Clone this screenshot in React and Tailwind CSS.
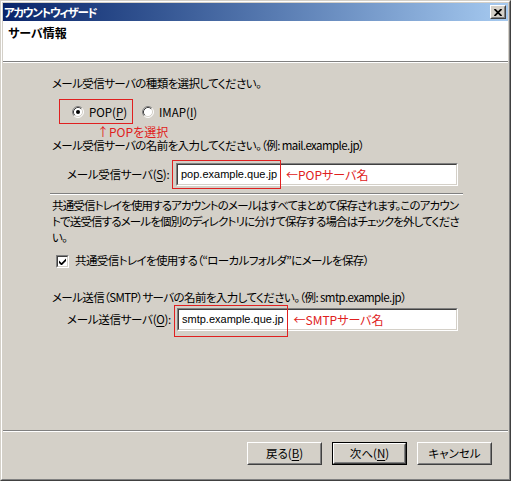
const jp = "font-['Noto_Sans_CJK_JP',sans-serif] [font-feature-settings:'palt']";

const Radio = ({ checked }) => (
  <svg width="12" height="12" viewBox="0 0 12 12" className="shrink-0">
    <circle cx="6" cy="6" r="5" fill="#ffffff" />
    <path d="M2.11 9.89 A5.5 5.5 0 0 1 9.89 2.11" fill="none" stroke="#808080" />
    <path d="M9.89 2.11 A5.5 5.5 0 0 1 2.11 9.89" fill="none" stroke="#ffffff" />
    <path d="M2.82 9.18 A4.5 4.5 0 0 1 9.18 2.82" fill="none" stroke="#404040" />
    <path d="M9.18 2.82 A4.5 4.5 0 0 1 2.82 9.18" fill="none" stroke="#d4d0c8" />
    {checked && <circle cx="6" cy="6" r="2" fill="#000000" />}
  </svg>
);

const CheckBox = () => (
  <div className="w-[13px] h-[13px] shrink-0 border border-t-[#808080] border-l-[#808080] border-b-white border-r-white">
    <div className="w-full h-full bg-white border border-t-[#404040] border-l-[#404040] border-b-[#d4d0c8] border-r-[#d4d0c8] flex items-center justify-center">
      <svg width="7" height="7" viewBox="0 0 7 7">
        <path d="M0 2.5 L2.5 5 L7 0.5 L7 3 L2.5 7.5 L0 5 Z" fill="#000000" />
      </svg>
    </div>
  </div>
);

const Field = ({ w, value, note, gap, box }) => (
  <div className={`relative h-[23px] ${w} border border-t-[#808080] border-l-[#808080] border-b-white border-r-white`}>
    <div className="w-full h-full bg-white border border-t-[#404040] border-l-[#404040] border-b-[#d4d0c8] border-r-[#d4d0c8] flex items-center pl-[3px]">
      <span className="font-['Liberation_Sans',Arial,sans-serif] text-[11px] tracking-normal text-black">{value}</span>
      <span className={`${gap} text-[12px] tracking-normal text-[#e02020]`}>{note}</span>
    </div>
    <div className={`absolute border border-[#e02020] pointer-events-none ${box}`} />
  </div>
);

const Btn = ({ children, def }) => {
  const face = (
    <div className="w-full h-full border border-t-white border-l-white border-b-[#404040] border-r-[#404040]">
      <div className="w-full h-full border border-t-[#d4d0c8] border-l-[#d4d0c8] border-b-[#808080] border-r-[#808080] flex items-center justify-center leading-none">
        {children}
      </div>
    </div>
  );
  return def
    ? <div className="w-[75px] h-[23px] border border-black">{face}</div>
    : <div className="w-[75px] h-[23px]">{face}</div>;
};

const Etched = ({ cls = "" }) => (
  <div className={cls}>
    <div className="h-px bg-[#808080]" />
    <div className="h-px bg-white" />
  </div>
);

export default function App() {
  return (
    <div className={`w-[511px] h-[481px] bg-[#d4d0c8] text-black text-[11.5px] tracking-[-0.6px] ${jp} border border-t-[#d4d0c8] border-l-[#d4d0c8] border-b-[#404040] border-r-[#404040]`}>
      <div className="h-full border border-t-white border-l-white border-b-[#808080] border-r-[#808080] p-px flex flex-col">
        {/* title bar */}
        <div className="h-[18px] shrink-0 bg-linear-to-r from-[#0a246a] to-[#a6caf0] flex items-center justify-between pl-[1px] pr-[2px]">
          <span className="text-white font-bold text-[11.5px] tracking-[-1.3px] leading-[18px]">アカウントウィザード</span>
          <div className="w-[16px] h-[14px] border border-t-white border-l-white border-b-[#404040] border-r-[#404040] bg-[#d4d0c8]">
            <div className="w-full h-full border border-t-[#d4d0c8] border-l-[#d4d0c8] border-b-[#808080] border-r-[#808080] flex items-center justify-center">
              <svg width="8" height="7" viewBox="0 0 8 7">
                <path d="M0.5 0 L7.5 7 M7.5 0 L0.5 7" stroke="#000000" strokeWidth="1.8" />
              </svg>
            </div>
          </div>
        </div>

        {/* header */}
        <div className="h-[40px] shrink-0 bg-white pl-[5px] pt-[4px]">
          <div className="font-bold text-[12px] tracking-normal leading-[16px]">サーバ情報</div>
        </div>
        <Etched />

        {/* body */}
        <div className="flex-1 pl-[49px] pt-[12px]">
          <p className="leading-[16px]">メール受信サーバの種類を選択してください。</p>

          <div className="mt-[8px] flex items-center h-[25px]">
            <div className="ml-[7px] w-[74px] h-[25px] border border-[#e02020] flex items-center pl-[12px] gap-[5px]">
              <Radio checked />
              <span className="leading-[14px] tracking-normal">POP(<u className="underline-offset-2">P</u>)</span>
            </div>
            <div className="ml-[9px] flex items-center gap-[5px]">
              <Radio />
              <span className="leading-[14px] tracking-normal">IMAP(<u className="underline-offset-2">I</u>)</span>
            </div>
          </div>
          <p className="mt-[2px] ml-[45px] leading-[12px] text-[12px] tracking-normal text-[#e02020]">↑POPを選択</p>

          <p className="mt-px leading-[12px] whitespace-nowrap">メール受信サーバの名前を入力してください。（例: mail.example.jp）</p>

          <div className="mt-[12px] flex items-center">
            <div className="w-[124px] pl-[15px] whitespace-nowrap tracking-[-0.3px]">メール受信サーバ(<u className="underline-offset-2">S</u>):</div>
            <Field w="w-[282px]" value="pop.example.que.jp" note="←POPサーバ名" gap="ml-[9px]" box="left-[-5px] top-[-4px] w-[109px] h-[29px]" />
          </div>

          <Etched cls="mt-[7px] ml-[-2px] w-[413px]" />

          <p className="mt-[2px] leading-[16px] whitespace-nowrap tracking-[-0.85px]">
            共通受信トレイを使用するアカウントのメールはすべてまとめて保存されます。このアカウン
            <br />
            トで送受信するメールを個別のディレクトリに分けて保存する場合はチェックを外してくださ
            <br />
            い。
          </p>

          <div className="mt-[8px] h-[16px] flex items-center gap-[6px] pl-[4px]">
            <CheckBox />
            <span className="whitespace-nowrap">共通受信トレイを使用する（“ローカルフォルダ”にメールを保存）</span>
          </div>

          <p className="mt-[21px] leading-[14px] whitespace-nowrap">メール送信（SMTP）サーバの名前を入力してください。（例: smtp.example.jp）</p>

          <div className="mt-[4px] flex items-center">
            <div className="w-[125px] pl-[15px] whitespace-nowrap tracking-[-0.3px]">メール送信サーバ(<u className="underline-offset-2">O</u>):</div>
            <Field w="w-[281px]" value="smtp.example.que.jp" note="←SMTPサーバ名" gap="ml-[10px]" box="left-[-4px] top-[-4px] w-[114px] h-[32px]" />
          </div>
        </div>

        <Etched />

        {/* buttons */}
        <div className="h-[46px] shrink-0 flex justify-end gap-[10px] pt-[10px] pr-[16px] tracking-normal">
          <Btn>戻る(<u className="underline-offset-2">B</u>)</Btn>
          <Btn def>次へ(<u className="underline-offset-2">N</u>)</Btn>
          <Btn>キャンセル</Btn>
        </div>
      </div>
    </div>
  );
}
